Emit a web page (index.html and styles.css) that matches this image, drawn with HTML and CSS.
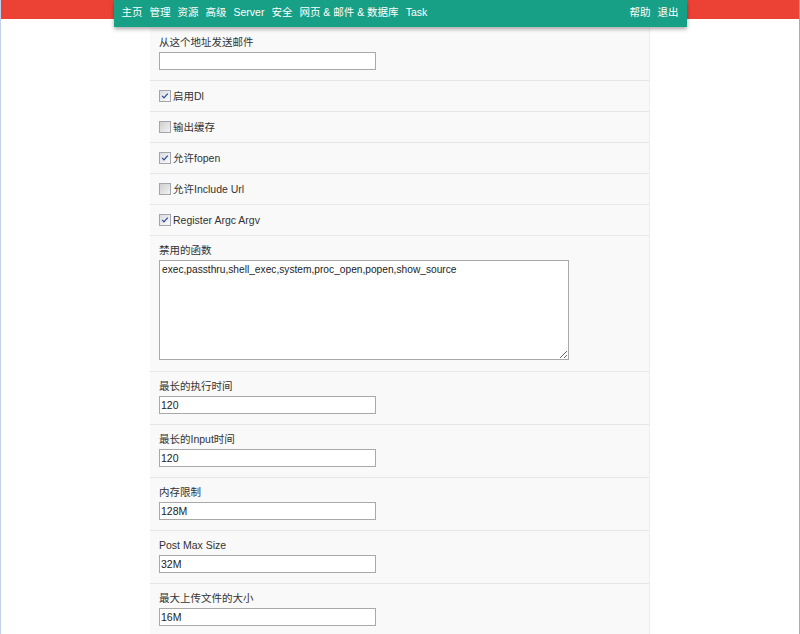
FILE: index.html
```html
<!DOCTYPE html>
<html lang="zh-CN">
<head>
<meta charset="utf-8">
<title>设置</title>
<link rel="stylesheet" href="styles.css">
</head>
<body>
<div class="page">
  <nav class="nav">
    <ul class="nav-left">
      <li>主页</li>
      <li>管理</li>
      <li>资源</li>
      <li>高级</li>
      <li>Server</li>
      <li>安全</li>
      <li>网页 &amp; 邮件 &amp; 数据库</li>
      <li>Task</li>
    </ul>
    <ul class="nav-right">
      <li>帮助</li>
      <li>退出</li>
    </ul>
  </nav>

  <form class="panel">
    <div class="row">
      <label class="label">从这个地址发送邮件</label>
      <input class="field" type="text" value="">
    </div>
    <div class="row check-row">
      <span class="box checked"><svg viewBox="0 0 12 12"><path d="M2.6 5.8 L4.8 8.2 L9.3 3.2" /></svg></span>
      <span class="check-text">启用Dl</span>
    </div>
    <div class="row check-row">
      <span class="box"></span>
      <span class="check-text">输出缓存</span>
    </div>
    <div class="row check-row">
      <span class="box checked"><svg viewBox="0 0 12 12"><path d="M2.6 5.8 L4.8 8.2 L9.3 3.2" /></svg></span>
      <span class="check-text">允许fopen</span>
    </div>
    <div class="row check-row">
      <span class="box"></span>
      <span class="check-text">允许Include Url</span>
    </div>
    <div class="row check-row">
      <span class="box checked"><svg viewBox="0 0 12 12"><path d="M2.6 5.8 L4.8 8.2 L9.3 3.2" /></svg></span>
      <span class="check-text">Register Argc Argv</span>
    </div>
    <div class="row area-row">
      <label class="label">禁用的函数</label>
      <textarea class="area">exec,passthru,shell_exec,system,proc_open,popen,show_source</textarea>
    </div>
    <div class="row">
      <label class="label">最长的执行时间</label>
      <input class="field" type="text" value="120">
    </div>
    <div class="row">
      <label class="label">最长的Input时间</label>
      <input class="field" type="text" value="120">
    </div>
    <div class="row">
      <label class="label">内存限制</label>
      <input class="field" type="text" value="128M">
    </div>
    <div class="row">
      <label class="label">Post Max Size</label>
      <input class="field" type="text" value="32M">
    </div>
    <div class="row">
      <label class="label">最大上传文件的大小</label>
      <input class="field" type="text" value="16M">
    </div>
  </form>
</div>
</body>
</html>
```
FILE: styles.css
```css
html, body {
  margin: 0;
  padding: 0;
  height: 100%;
  overflow: hidden;
}

body {
  font-family: "Liberation Sans", "Noto Sans CJK SC", sans-serif;
  font-size: 10.5px;
  color: #333;
  background: linear-gradient(#ec4236 0, #ec4236 19px, #fff 19px);
}

.page {
  min-height: 100%;
  box-sizing: border-box;
  border-left: 1px solid #c3d0e8;
  border-right: 1px solid #8eaee6;
}

/* top navigation bar */
.nav {
  width: 573px;
  height: 27px;
  margin: 0 auto;
  box-sizing: border-box;
  padding: 0 8px;
  background: #17a086;
  box-shadow: 0 2px 4px rgba(0, 0, 0, 0.35);
  display: flex;
  justify-content: space-between;
  align-items: center;
  position: relative;
  z-index: 2;
  color: #fff;
  font-size: 10.5px;
}

.nav ul {
  list-style: none;
  margin: 0;
  padding: 0;
  display: flex;
  gap: 7px;
}

.nav li {
  line-height: 22px;
  margin-top: -4px;
}

/* settings panel */
.panel {
  width: 500px;
  margin: 1px auto 0;
  box-sizing: border-box;
  background: #f9f9f9;
  border-right: 1px solid #ececec;
}

.row {
  padding: 7px 9px 10px;
  border-bottom: 1px solid #e6e6e6;
}

.area-row {
  padding-bottom: 11px;
}

.label {
  display: block;
  line-height: 14px;
  margin-bottom: 3px;
}

.field {
  display: block;
  width: 217px;
  height: 18px;
  box-sizing: border-box;
  margin: 0;
  padding: 0 1px;
  border: 1px solid #a9a9a9;
  background: #fff;
  font: inherit;
  color: #222;
  outline: none;
}

.area {
  display: block;
  width: 410px;
  height: 100px;
  box-sizing: border-box;
  margin: 0;
  padding: 2px 2px;
  border: 1px solid #a9a9a9;
  background: #fff;
  font-family: "Liberation Sans", sans-serif;
  font-size: 10.2px;
  line-height: 14px;
  color: #222;
  resize: both;
  outline: none;
}

/* checkbox rows */
.check-row {
  display: flex;
  align-items: center;
  padding: 8px 9px 8px;
  height: 14px;
  line-height: 14px;
}

.box {
  width: 12px;
  height: 12px;
  box-sizing: border-box;
  border: 1px solid #a2a6ac;
  background: linear-gradient(135deg, #cfcfcf, #f2f2f2);
  margin-right: 2px;
  flex: none;
  display: flex;
}

.box.checked {
  background: linear-gradient(135deg, #d8dbe0, #fbfbfb);
}

.box svg {
  width: 10px;
  height: 10px;
}

.box svg path {
  fill: none;
  stroke: #2d4a9a;
  stroke-width: 1.5;
}

.check-text {
  margin-left: 0;
}
```
